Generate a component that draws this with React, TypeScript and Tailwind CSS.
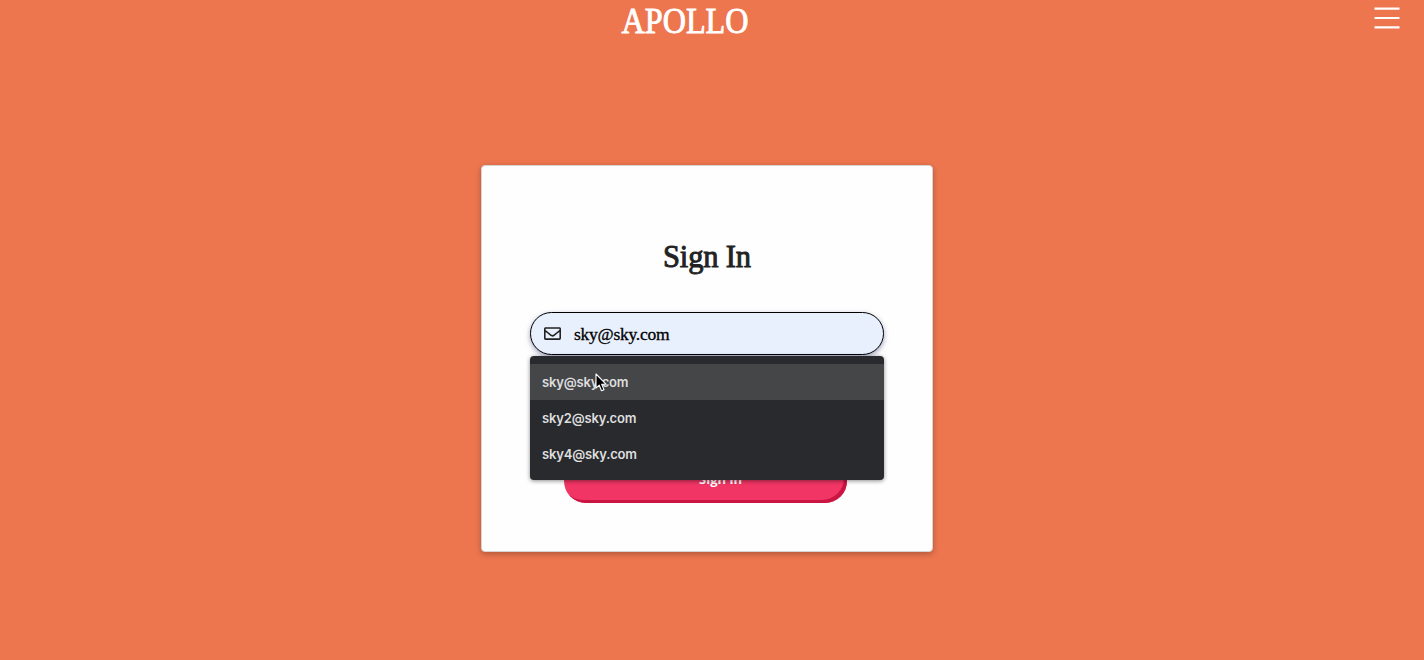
import { useState } from "react";
import { FaRegEnvelope } from "react-icons/fa";

const suggestions = ["sky@sky.com", "sky2@sky.com", "sky4@sky.com"];

function Header() {
  return (
    <header className="grid h-[44px] grid-cols-[1fr_auto_1fr] items-start">
      <span />
      <h1 className="mr-[55px] origin-center scale-x-[0.895] whitespace-nowrap font-['Liberation_Serif',serif] text-[36px] leading-[43px] text-white [-webkit-text-stroke:0.9px_white]">
        APOLLO
      </h1>
      <button aria-label="Menu" className="mr-[24px] mt-[7px] justify-self-end">
        <svg width="26" height="23" viewBox="0 0 26 23" className="block">
          <path d="M0.5 1.6H25.5M0.5 11H25.5M0.5 20.4H25.5" stroke="white" strokeWidth="2.2" />
        </svg>
      </button>
    </header>
  );
}

function Cursor() {
  return (
    <svg width="13" height="20" viewBox="0 0 13 20" className="absolute left-[65px] top-[17px]">
      <path
        d="M1 1V15.2L4.2 12.2L6.5 17.7L9 16.7L6.7 11.3H11.2Z"
        fill="black"
        stroke="white"
        strokeWidth="1.1"
        strokeLinejoin="round"
      />
    </svg>
  );
}

export default function App() {
  const [email, setEmail] = useState("sky@sky.com");
  return (
    <div className="h-[660px] w-full overflow-hidden bg-[#ed764f]">
      <Header />
      <main className="mt-[121px] flex justify-center pr-[10px]">
        <form className="flex h-[387px] w-[452px] flex-col items-center rounded-[4px] border border-[#d8d4d2] bg-[#fefefe] shadow-[0_2px_6px_rgba(0,0,0,0.27)]">
          <h2 className="mt-[71px] h-[40px] whitespace-nowrap font-['Liberation_Serif',serif] text-[30.5px] leading-[41px] tracking-[-0.15px] text-[#222] [-webkit-text-stroke:0.9px_#222]">
            Sign In
          </h2>
          <div className="relative mt-[35px] w-[354px]">
            <label className="flex h-[43px] items-center rounded-full border border-black bg-[#e8effd] pl-[13px] shadow-[0_2px_5px_rgba(60,66,120,0.5)]">
              <FaRegEnvelope className="size-[17px] text-[#222]" />
              <input
                value={email}
                onChange={(e) => setEmail(e.target.value)}
                className="ml-[13px] w-[250px] bg-transparent pt-[2px] font-['Liberation_Serif',serif] text-[17.5px] tracking-[-0.25px] text-black outline-none [-webkit-text-stroke:0.3px_black]"
              />
            </label>
            <div className="absolute left-0 top-[44px] z-10 w-full overflow-visible rounded-[4px] bg-[#292a2d] py-[8px] shadow-[0_1px_4px_rgba(0,0,0,0.45)]">
              {suggestions.map((s, i) => (
                <div
                  key={s}
                  className={`flex h-[36px] items-center pl-[12px] pt-[2px] font-['Inter',sans-serif] text-[13px] font-semibold tracking-[-0.18px] text-[#dededf] ${i === 0 ? "bg-[#454648]" : ""}`}
                >
                  {s}
                </div>
              ))}
              <Cursor />
            </div>
          </div>
          <button
            type="button"
            className="mr-[3px] mt-[103px] h-[45px] w-[283px] rounded-[22px] bg-[#f13564] pb-[2px] pl-[30px] font-['Open_Sans',sans-serif] text-[13px] font-bold text-white shadow-[inset_-3px_-3px_0_#ca1442]"
          >
            Sign in
          </button>
        </form>
      </main>
    </div>
  );
}
